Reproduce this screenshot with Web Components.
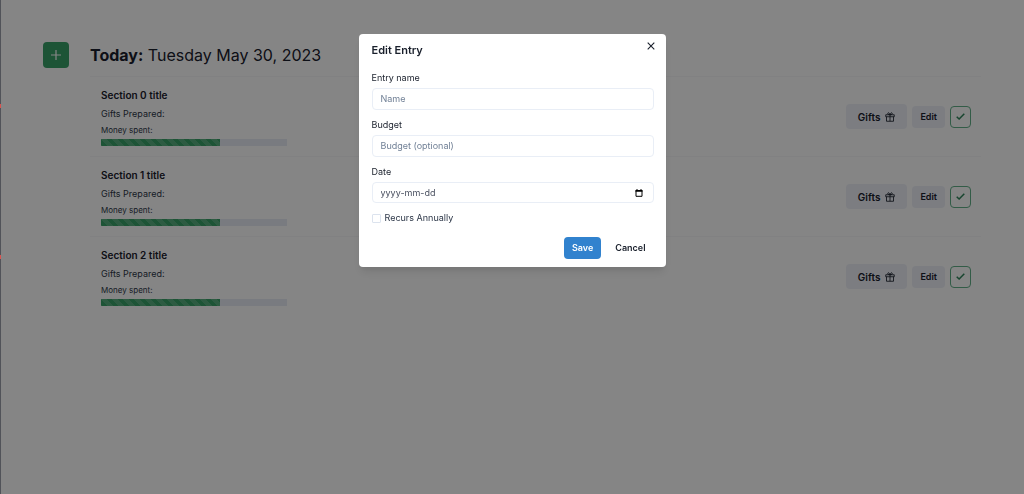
<!DOCTYPE html>
<html lang="en">
<head>
<meta charset="utf-8">
<meta name="viewport" content="width=device-width, initial-scale=1">
<title>Gift planner</title>
<style>
html, body { margin: 0; min-height: 100%; }
body { font: 9px/14px Inter, sans-serif; color: #1a202c; background: #fff; overflow-x: hidden; }
</style>
</head>
<body>
<gift-planner>
  <day-header slot="header"><strong slot="label">Today:</strong> Tuesday May 30, 2023</day-header>
  <entry-row>Section 0 title</entry-row>
  <entry-row>Section 1 title</entry-row>
  <entry-row>Section 2 title</entry-row>
</gift-planner>
<edge-strip></edge-strip>
<entry-dialog heading="Edit Entry">
  <text-field label="Entry name" hint="Name"></text-field>
  <text-field label="Budget" hint="Budget (optional)"></text-field>
  <text-field label="Date" hint="yyyy-mm-dd" kind="date"></text-field>
  <check-field>Recurs Annually</check-field>
  <action-button slot="actions" kind="primary">Save</action-button>
  <action-button slot="actions" kind="ghost">Cancel</action-button>
</entry-dialog>

<script>
function define(name, markup, setup) {
  customElements.define(name, class extends HTMLElement {
    constructor() {
      super();
      this.attachShadow({ mode: 'open' }).innerHTML = markup;
    }
    connectedCallback() { if (setup) setup(this, this.shadowRoot); }
  });
}

define('gift-planner', `
<style>
  :host { display: block; padding: 42px 43px; }
  .list { margin: 8px 0 0 47px; border-top: 1px solid #f7f7f9; }
</style>
<slot name="header"></slot>
<main class="list"><slot></slot></main>`);

define('day-header', `
<style>
  :host { display: flex; align-items: center; gap: 21px; }
  button { width: 26px; height: 26px; padding: 0; border: 0; border-radius: 4px; background: #38a169; display: grid; place-items: center; }
  h1 { margin: 0; font-size: 16px; line-height: 24px; font-weight: 400; }
</style>
<button type="button" aria-label="Add entry"><svg width="10" height="10" viewBox="0 0 10 10"><path d="M5 0v10M0 5h10" stroke="#fff" stroke-width="1.2"/></svg></button>
<h1><slot name="label"></slot> <slot></slot></h1>`);

define('entry-row', `
<style>
  :host { display: flex; align-items: center; justify-content: space-between; padding: 10px 10px 10px 11px; border-bottom: 1px solid #f7f7f9; }
  :host(:last-of-type) { border-bottom-color: transparent; }
  h2 { margin: 0 0 3px; font-size: 10px; line-height: 16px; font-weight: 600; }
  p { margin: 0; line-height: 16px; color: #2d3748; }
  label { display: block; font-size: 8px; line-height: 16px; color: #2d3748; }
  progress { display: block; appearance: none; border: 0; width: 186px; height: 7px; margin-top: 1px; background: #edf2f7; }
  progress::-webkit-progress-bar { background: #e9ebf5; }
  progress::-webkit-progress-value {
    background: linear-gradient(45deg, rgba(255,255,255,.15) 25%, transparent 25%, transparent 50%, rgba(255,255,255,.15) 50%, rgba(255,255,255,.15) 75%, transparent 75%) 0 0 / 11px 11px, #38a169;
  }
  .actions { display: flex; align-items: center; gap: 5px; }
</style>
<section>
  <h2><slot></slot></h2>
  <p>Gifts Prepared:</p>
  <label for="spent">Money spent:</label>
  <progress id="spent" value="64" max="100"></progress>
</section>
<div class="actions">
  <action-button kind="large">Gifts <svg slot="icon" width="10" height="10" viewBox="0 0 20 20" fill="none" stroke="currentColor" stroke-width="1.7"><path d="M1.5 5.5h17v4h-17zM3 9.5v9h14v-9M10 5.5v13M10 5.5C8 5.5 5.5 5 5.5 3S9 .5 10 5.500C11 .5 14.500 1 14.500 3S12 5.500 10 5.500"/></svg></action-button>
  <action-button kind="small">Edit</action-button>
  <action-button kind="outline" name="Mark as done"><svg slot="icon" width="9" height="7" viewBox="0 0 9 7" fill="none" stroke="currentColor" stroke-width="1.5"><path d="M.7 3.700l2.400 2.300L8.300.7"/></svg></action-button>
</div>`);

define('action-button', `
<style>
  :host { display: block; }
  button { display: flex; align-items: center; justify-content: center; gap: 5px; height: 22px; padding: 0 8px; border: 0; border-radius: 4px; font: 600 9px/14px Inter, sans-serif; color: #1a202c; background: #edf0f8; }
  :host([kind=primary]) button { color: #fff; background: #3182ce; }
  :host([kind=ghost]) button { background: transparent; }
  :host([kind=large]) button { height: 25px; padding: 0 12px; font-size: 10px; }
  :host([kind=outline]) button { width: 21px; padding: 0; color: #2f855a; border: 1px solid #62b088; background: transparent; }
  :host([kind=outline]) .text { display: none; }
</style>
<button type="button"><span class="text"><slot></slot></span><slot name="icon"></slot></button>`,
(host, root) => {
  if (host.hasAttribute('name')) root.querySelector('button').setAttribute('aria-label', host.getAttribute('name'));
});

define('edge-strip', `
<style>
  :host { position: fixed; inset: 0 auto 0 0; width: 1px; z-index: 2; background: #515359; }
  i { position: absolute; left: 0; width: 1px; height: 4px; background: #d9534f; }
  i:first-of-type { top: 104px; }
  i:last-of-type { top: 255px; }
</style><i></i><i></i>`);

define('entry-dialog', `
<style>
  :host { position: fixed; inset: 0; z-index: 1; background: rgba(0,0,0,.48); display: flex; justify-content: center; align-items: flex-start; padding: 34px 16px; }
  .panel { position: relative; box-sizing: border-box; width: 100%; max-width: 307px; padding: 8px 12px 8px 13px; background: #fff; border-radius: 4px; box-shadow: 0 7px 10px -2px rgba(0,0,0,.1), 0 3px 4px -1px rgba(0,0,0,.04); }
  h2 { margin: 0 0 13px; font-size: 11px; line-height: 16px; font-weight: 600; }
  .close { position: absolute; top: 3px; right: 6px; width: 18px; height: 18px; display: grid; place-items: center; padding: 0; border: 0; background: transparent; color: #1a202c; }
  .fields { display: flex; flex-direction: column; gap: 8px; }
  footer { display: flex; justify-content: flex-end; gap: 6px; margin-top: 12px; }
</style>
<div class="panel" role="dialog" aria-modal="true" aria-labelledby="heading">
  <h2 id="heading"></h2>
  <button class="close" type="button" aria-label="Close"><svg width="8" height="8" viewBox="0 0 8 8"><path d="M.7.7l6.600 6.600M7.300.7L.7 7.300" stroke="currentColor" stroke-width="1.100"/></svg></button>
  <div class="fields"><slot></slot></div>
  <footer><slot name="actions"></slot></footer>
</div>`,
(host, root) => { root.querySelector('h2').textContent = host.getAttribute('heading'); });

define('text-field', `
<style>
  :host { display: block; }
  label { display: block; margin-bottom: 3px; line-height: 14px; color: #1a202c; }
  .box { display: flex; align-items: center; box-sizing: border-box; height: 22px; padding: 0 10px 0 8px; border: 1px solid #e9eef6; border-radius: 4px; }
  input { flex: 1; min-width: 0; padding: 0; border: 0; outline: 0; background: transparent; font: 9px/14px Inter, sans-serif; color: #1a202c; }
  input::placeholder { color: #718096; opacity: 1; }
  button { display: none; padding: 0; border: 0; background: transparent; color: #000; }
  :host([kind=date]) .box { height: 21px; }
  :host([kind=date]) input::placeholder { color: #4a5060; }
  :host([kind=date]) button { display: block; }
  svg { display: block; }
</style>
<label for="field"></label>
<div class="box"><input id="field" type="text"><button type="button" aria-label="Choose date"><svg width="8" height="8" viewBox="0 0 8 8"><path d="M1 1.500h6v5.800H1z" fill="none" stroke="currentColor"/><path d="M.5 1h7v1.700h-7zM1.500 0h1v1h-1zM5.500 0h1v1h-1z" fill="currentColor"/></svg></button></div>`,
(host, root) => {
  root.querySelector('label').textContent = host.getAttribute('label');
  root.querySelector('input').placeholder = host.getAttribute('hint');
});

define('check-field', `
<style>
  :host { display: block; }
  label { display: flex; align-items: center; gap: 4px; line-height: 14px; color: #2d3748; }
  input { appearance: none; box-sizing: border-box; width: 9px; height: 9px; margin: 0; border: 1px solid #dce3ee; border-radius: 1px; background: #fff; }
</style>
<label><input type="checkbox"><span><slot></slot></span></label>`);
</script>
</body>
</html>
